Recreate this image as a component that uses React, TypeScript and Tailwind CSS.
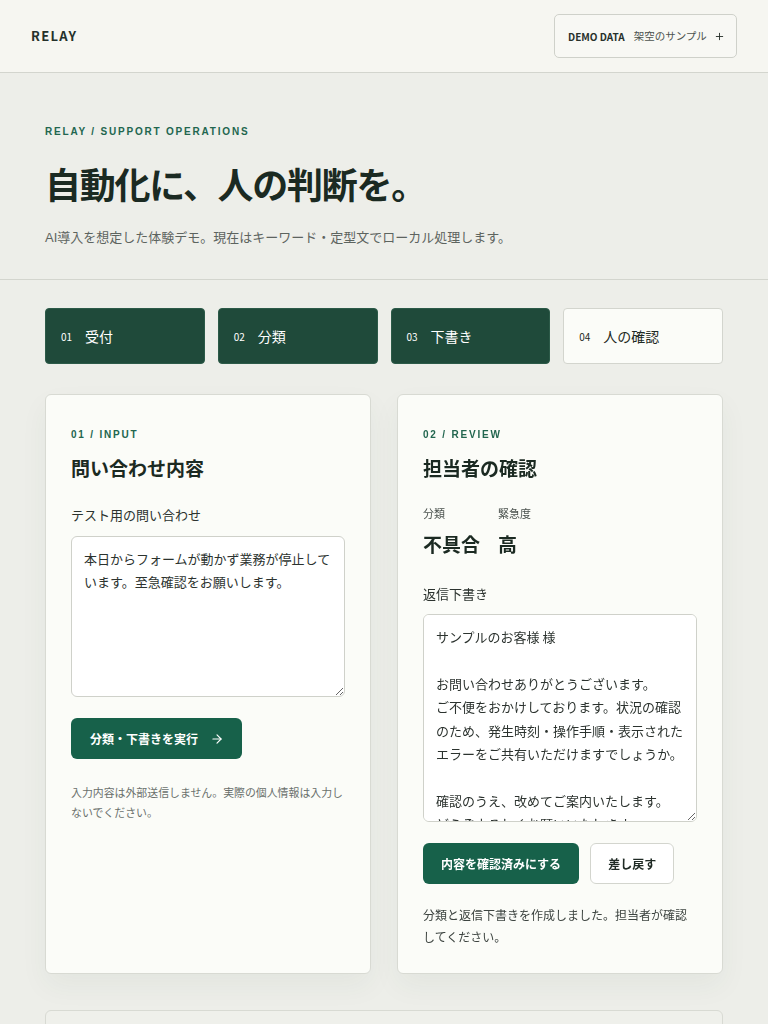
import { ArrowRight, Plus } from "lucide-react";

const sans = "font-['Liberation_Sans','Noto_Sans_CJK_JP',sans-serif]";
const jp = "font-['Noto_Sans_CJK_JP','Liberation_Sans',sans-serif]";

const steps = [
  { no: "01", label: "受付", done: true },
  { no: "02", label: "分類", done: true },
  { no: "03", label: "下書き", done: true },
  { no: "04", label: "人の確認", done: false },
];

const draft = `サンプルのお客様 様

お問い合わせありがとうございます。
ご不便をおかけしております。状況の確認のため、発生時刻・操作手順・表示されたエラーをご共有いただけますでしょうか。

確認のうえ、改めてご案内いたします。
どうぞよろしくお願いいたします。`;

function Eyebrow({ children }: { children: React.ReactNode }) {
  return (
    <p className={`${sans} text-[10px] leading-[15px] font-bold tracking-[0.18em] text-[#22664f]`}>
      {children}
    </p>
  );
}

export default function App() {
  return (
    <div className={`${sans} min-h-screen bg-[#edeee9] text-[#2c332f]`}>
      <header className="h-[73px] border-b border-[#d3d5ce] bg-[#f6f6f1] flex items-center justify-between pl-[31px] pr-[31px]">
        <span className={`${jp} text-[13px] font-semibold tracking-[0.1em] text-[#24302a]`}>RELAY</span>
        <button className="h-[44px] w-[183px] rounded-[5px] border border-[#cfd1ca] bg-[#f8f8f4] flex items-center pl-[13px]">
          <span className={`${jp} text-[10px] font-semibold text-[#27302b]`}>DEMO DATA</span>
          <span className={`${jp} ml-[9px] text-[10.5px] text-[#4c534f]`}>架空のサンプル</span>
          <Plus className="ml-[7px] h-[11px] w-[11px] text-[#27302b]" strokeWidth={2} />
        </button>
      </header>

      <section className="border-b border-[#d3d5ce] pt-[51px] pb-[31px] px-[45px]">
        <Eyebrow>RELAY / SUPPORT OPERATIONS</Eyebrow>
        <h1 className={`${jp} mt-[20px] text-[36px] leading-[48px] font-bold tracking-[-0.035em] text-[#1b2a22]`}>
          自動化に、人の判断を。
        </h1>
        <p className={`${sans} mt-[21px] text-[13px] leading-[20px] text-[#5d645f]`}>
          AI導入を想定した体験デモ。現在はキーワード・定型文でローカル処理します。
        </p>
      </section>

      <main className="px-[45px] pt-[28px] pb-10">
        <div className="grid grid-cols-4 gap-[13px]">
          {steps.map((s) => (
            <div
              key={s.no}
              className={`h-[56px] rounded-[4px] border flex items-center pl-[15px] ${
                s.done
                  ? "bg-[#1f4a3a] border-[#2c5a48] text-white"
                  : "bg-[#fbfcf8] border-[#d3d5ce] text-[#1f2a24]"
              }`}
            >
              <span className={`${jp} text-[10px] w-[24px]`}>{s.no}</span>
              <span className={`${jp} text-[14px]`}>{s.label}</span>
            </div>
          ))}
        </div>

        <div className="mt-[30px] grid grid-cols-2 gap-[26px]">
          {/* input card */}
          <div className="rounded-[6px] border border-[#d8dad3] bg-[#fbfcf8] px-[25px] pt-[32px] pb-[25px] shadow-[0_12px_28px_rgba(40,70,50,0.05)]">
            <Eyebrow>01 / INPUT</Eyebrow>
            <h2 className={`${jp} mt-3 text-[19px] leading-[28px] font-bold text-[#1b2a22]`}>問い合わせ内容</h2>
            <p className={`${jp} mt-[23px] text-[13px] leading-[20px] text-[#2c332f]`}>テスト用の問い合わせ</p>
            <textarea
              defaultValue="本日からフォームが動かず業務が停止しています。至急確認をお願いします。"
              className={`${jp} mt-[11px] block h-[161px] w-full resize-y rounded-[6px] border border-[#cfd1ca] bg-white px-3 pt-[10px] text-[13px] leading-[1.8] text-[#2c332f] outline-none [scrollbar-width:none]`}
            />
            <button className="mt-[21px] h-[41px] rounded-[6px] bg-[#17614a] pl-[19px] pr-[18px] flex items-center gap-[12px] text-white">
              <span className={`${jp} text-[12px] font-bold`}>分類・下書きを実行</span>
              <ArrowRight className="h-[14px] w-[14px]" strokeWidth={2} />
            </button>
            <p className={`${jp} mt-[23px] text-[10.9px] leading-[20px] text-[#6a706c]`}>
              入力内容は外部送信しません。実際の個人情報は入力しないでください。
            </p>
          </div>

          {/* review card */}
          <div className="rounded-[6px] border border-[#d8dad3] bg-[#fbfcf8] px-[25px] pt-[32px] pb-[25px] shadow-[0_12px_28px_rgba(40,70,50,0.05)]">
            <Eyebrow>02 / REVIEW</Eyebrow>
            <h2 className={`${jp} mt-3 text-[19px] leading-[28px] font-bold text-[#1b2a22]`}>担当者の確認</h2>
            <div className="mt-[23px] flex">
              <div className="w-[75px]">
                <p className={`${jp} text-[11px] leading-[16px] text-[#4a514d]`}>分類</p>
                <p className={`${jp} mt-[9px] text-[19px] leading-[28px] font-bold text-[#1b2a22]`}>不具合</p>
              </div>
              <div>
                <p className={`${jp} text-[11px] leading-[16px] text-[#4a514d]`}>緊急度</p>
                <p className={`${jp} mt-[9px] text-[19px] leading-[28px] font-bold text-[#1b2a22]`}>高</p>
              </div>
            </div>
            <p className={`${jp} mt-[26px] text-[13px] leading-[20px] text-[#2c332f]`}>返信下書き</p>
            <textarea
              defaultValue={draft}
              className={`${jp} mt-[10px] block h-[208px] w-full resize-y rounded-[6px] border border-[#cfd1ca] bg-white px-3 pt-[10px] text-[13px] leading-[1.8] text-[#2c332f] outline-none [scrollbar-width:none]`}
            />
            <div className="mt-[21px] flex gap-[11px]">
              <button className="h-[41px] rounded-[6px] bg-[#17614a] px-[18px] text-white">
                <span className={`${jp} text-[12px] font-bold`}>内容を確認済みにする</span>
              </button>
              <button className="h-[41px] rounded-[6px] border border-[#d3d5ce] bg-white px-[17px] text-[#1f2a24]">
                <span className={`${jp} text-[12px] font-bold`}>差し戻す</span>
              </button>
            </div>
            <p className={`${jp} mt-[20px] text-[12px] leading-[22px] text-[#3d4440]`}>
              分類と返信下書きを作成しました。担当者が確認してください。
            </p>
          </div>
        </div>

        <div className="mt-[36px] h-[160px] rounded-[6px] border border-[#d8dad3] bg-[#eff0eb]" />
      </main>
    </div>
  );
}
